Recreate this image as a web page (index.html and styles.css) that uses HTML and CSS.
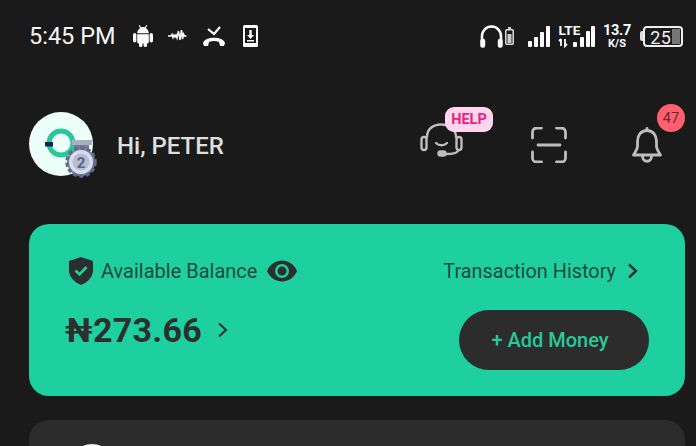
FILE: index.html
```html
<!DOCTYPE html>
<html lang="en">
<head>
<meta charset="utf-8">
<title>Wallet home</title>
<link rel="stylesheet" href="styles.css">
</head>
<body>
<div class="status">
  <div class="status-left">
    <span class="clock">5:45 PM</span>
    <svg class="ic-android" width="20" height="22" viewBox="0 0 20 22" fill="#fff"><path d="M6.500 0l1.700 2.300c1.100-.4 2.500-.4 3.600 0L13.500 0l.8.500-1.500 2.400C14.600 4 15.800 6 15.800 8.300H4.200C4.200 6 5.400 4 7.200 2.900L5.700.5z"/><path d="M4.200 9.200h11.600V17a1.500 1.500 0 0 1-1.500 1.500H5.700A1.500 1.500 0 0 1 4.200 17z"/><rect x="0" y="8" width="3.400" height="9.500" rx="1.700"/><rect x="16.600" y="8" width="3.400" height="9.500" rx="1.700"/><rect x="6" y="17" width="3.400" height="5" rx="1.600"/><rect x="10.600" y="17" width="3.400" height="5" rx="1.600"/></svg>
    <svg class="ic-wave" width="20" height="14" viewBox="0 0 20 14" fill="none" stroke="#fff" stroke-width="1.500"><path d="M0 7h3l1-1.500 1 3 1-2.500 1 2 1-2 1 3 1.500-7 1.500 9 1.500-10 1 9 1-5 1 2h2"/></svg>
    <svg class="ic-call" width="22" height="21" viewBox="0 0 22 21" fill="none"><path d="M5 3l6 5 6-7" stroke="#fff" stroke-width="2.200"/><path d="M0 17c2-7 20-7 22 0l-1 3h-4l-1-4c-3-1.500-7-1.500-10 0l-1 4H1z" fill="#fff"/></svg>
    <svg class="ic-dl" width="15" height="22" viewBox="0 0 15 22"><rect width="15" height="22" rx="1.500" fill="#fff"/><path d="M2 3h11v15H2z" fill="#1a1a1a"/><path d="M6.300 5h2.400v5H11l-3.500 4L4 10h2.300zM4 15h7v1.500H4z" fill="#fff"/></svg>
  </div>
  <div class="status-right">
    <svg class="ic-head" width="23" height="23" viewBox="0 0 23 23" fill="none" stroke="#fff" stroke-width="2.500"><path d="M2 17V11a9.500 9.500 0 0 1 19 0v6"/><rect x="1.500" y="15" width="2.500" height="6.500" rx="1" fill="#fff"/><rect x="19" y="15" width="2.500" height="6.500" rx="1" fill="#fff"/></svg>
    <svg class="ic-bat" width="9" height="18" viewBox="0 0 9 18"><path d="M3 0h3v2H3z" fill="#ccc"/><rect x=".8" y="2.800" width="7.400" height="14.400" rx="1" fill="none" stroke="#ddd" stroke-width="1.500"/><rect x="2.500" y="7" width="4" height="9" fill="#ccc"/></svg>
    <svg class="ic-sig" width="22" height="21" viewBox="0 0 22 21" fill="#fff"><rect y="15" width="4" height="6" rx="1"/><rect x="6" y="11" width="4" height="10" rx="1"/><rect x="12" y="6" width="4" height="15" rx="1"/><rect x="18" y="0" width="4" height="21" rx="1"/></svg>
    <svg class="ic-lte" width="37" height="22" viewBox="0 0 37 22" fill="#fff"><text class="lte-text" x="0.500" y="10">LTE</text><path d="M3 14v7M1 16l2-2M7 14v7l2-2" stroke="#fff" stroke-width="1.800" fill="none"/><rect x="15" y="17" width="4" height="5" rx="1"/><rect x="22" y="12" width="4" height="10" rx="1"/><rect x="28" y="6" width="4" height="16" rx="1"/><rect x="33" y="1" width="4" height="21" rx="1"/></svg>
    <div class="speed"><span class="speed-num">13.7</span><span class="speed-unit">K/S</span></div>
    <div class="battery"><span class="batt-tip"></span><div class="batt-body"><span class="batt-num">25</span><span class="batt-fill"></span></div></div>
  </div>
</div>

<header class="top">
  <div class="user">
    <div class="avatar">
      <svg class="avatar-art" width="64" height="64" viewBox="0 0 64 64"><circle cx="32" cy="32" r="32" fill="#ecfff8"/><circle cx="32" cy="31" r="12" fill="none" stroke="#27c99b" stroke-width="5"/><rect x="16" y="30" width="8" height="4.500" fill="#1b1c5c"/><rect x="43" y="28" width="20" height="5" fill="#a9afc2"/><rect x="45" y="33" width="15" height="6" fill="#767c90"/><circle cx="52" cy="50" r="14" fill="#7a85a8" stroke="#5f6b8f" stroke-width="3.500" stroke-dasharray="4 2.500"/><circle cx="52" cy="50" r="12" fill="#d9dcea"/><circle cx="52" cy="50" r="8.500" fill="#b6bdd6"/><text class="medal" x="52" y="55.500" text-anchor="middle">2</text></svg>
    </div>
    <span class="greet">Hi, PETER</span>
  </div>
  <div class="actions">
    <div class="help">
      <svg width="44" height="38" viewBox="0 0 44 38" fill="none" stroke="#bdbdbd" stroke-width="2.400" stroke-linecap="round"><path d="M7 17C7 9 13 4.500 21 4.500S36 9 36 17"/><rect x="1.500" y="17" width="5" height="13" rx="2.500"/><rect x="36.500" y="17" width="5" height="13" rx="2.500"/><path d="M16 23c3 3 8 3 11 0M38 31c-1 2-6 3-12 3"/><rect x="18.500" y="31.500" width="7" height="4" rx="2" fill="#bdbdbd"/></svg>
      <span class="help-tag">HELP</span>
    </div>
    <svg class="scan" width="36" height="36" viewBox="0 0 36 36" fill="none" stroke="#bdbdbd" stroke-width="2.800" stroke-linecap="round"><path d="M1.500 11V5a4 4 0 0 1 4-4h5M25.500 1h5a4 4 0 0 1 4 4v6M34.500 25v6a4 4 0 0 1-4 4h-5M10.500 35h-5a4 4 0 0 1-4-4v-6M7 18h22"/></svg>
    <div class="bell">
      <svg width="30" height="37" viewBox="0 0 30 37" fill="none" stroke="#bdbdbd" stroke-width="2.800" stroke-linejoin="round" stroke-linecap="round"><path d="M15 3.500c-6 0-9.500 5-9.500 10.500v5c0 3-2 6-4 9h27c-2-3-4-6-4-9v-5c0-5.500-3.500-10.500-9.500-10.500zM15 1.500v2M10.500 29c0 7 9 7 9 0"/></svg>
      <span class="bell-count">47</span>
    </div>
  </div>
</header>

<section class="balance">
  <div class="row">
    <div class="label">
      <svg width="24" height="28" viewBox="0 0 24 28"><path d="M12 0l12 4v9c0 7-5 12-12 15C5 25 0 20 0 13V4z" fill="#2b2f2e"/><path d="M6.500 13.500l4 4 7-7.500" fill="none" stroke="#1ecf9f" stroke-width="2.600"/></svg>
      <span class="label-text">Available Balance</span>
      <svg class="eye" width="30" height="22" viewBox="0 0 30 22"><path d="M0 11C3 4 9 .5 15 .5S27 4 30 11c-3 7-9 10.500-15 10.500S3 18 0 11z" fill="#2b2f2e"/><circle cx="15" cy="11" r="7" fill="#1ecf9f"/><circle cx="15" cy="11" r="4.500" fill="#2b2f2e"/></svg>
    </div>
    <div class="history">
      <span class="history-text">Transaction History</span>
      <svg width="11" height="16" viewBox="0 0 11 16" fill="none" stroke="#2b2f2e" stroke-width="2.400"><path d="M2 1.500L9 8l-7 6.500"/></svg>
    </div>
  </div>
  <div class="row row-low">
    <div class="amount-wrap">
      <span class="amount">₦273.66</span>
      <svg width="11" height="16" viewBox="0 0 11 16" fill="none" stroke="#2b2f2e" stroke-width="2"><path d="M2 1.500L9 8l-7 6.500"/></svg>
    </div>
    <button class="add">+ Add Money</button>
  </div>
</section>

<section class="next">
  <div class="next-avatar"></div>
</section>
</body>
</html>
```
FILE: styles.css
```css
* { box-sizing: border-box; }
html, body { margin: 0; padding: 0; }
body {
  width: 696px;
  height: 446px;
  overflow: hidden;
  background: #1a1a1a;
  font-family: Roboto, "Liberation Sans", sans-serif;
  color: #fff;
}
svg { display: block; flex: none; }

.status {
  height: 72px;
  padding: 0 13px 0 29px;
  display: flex;
  align-items: center;
  justify-content: space-between;
}
.status-left, .status-right { display: flex; align-items: center; }
.clock { font-size: 23.500px; font-weight: 400; color: #f5f5f5; width: 104px; white-space: nowrap; }
.ic-wave { margin-left: 15px; }
.ic-call { margin-left: 15px; }
.ic-dl { margin-left: 18px; }
.ic-bat { margin-left: 2px; }
.ic-sig { margin-left: 14px; }
.ic-lte { margin-left: 8px; overflow: visible; }
.lte-text { font: 700 13.500px Roboto, sans-serif; fill: #fff; }
.speed { margin-left: 8px; width: 28px; display: flex; flex-direction: column; align-items: center; }
.speed-num { font-size: 14.500px; font-weight: 700; height: 15px; line-height: 15px; letter-spacing: -.3px; }
.speed-unit { font-size: 11px; font-weight: 700; height: 11px; line-height: 11px; }
.battery { margin-left: 9px; display: flex; align-items: center; }
.batt-tip { width: 3px; height: 10px; background: #ddd; border-radius: 2px 0 0 2px; }
.batt-body {
  width: 40px;
  height: 21px;
  border: 2px solid #eee;
  border-radius: 4px;
  display: flex;
  align-items: stretch;
  justify-content: flex-end;
  padding: 1px;
  gap: 1px;
}
.batt-num { font-size: 18px; line-height: 17px; letter-spacing: .2px; color: #eee; }
.batt-fill { width: 8px; background: #777; }

.top {
  height: 72px;
  margin-top: 32px;
  padding: 0 11px 0 29px;
  display: flex;
  justify-content: space-between;
}
.user { display: flex; align-items: center; gap: 24px; padding-top: 8px; }
.avatar { width: 64px; height: 64px; }
.avatar-art { overflow: visible; }
.medal { font: 700 15px Roboto, sans-serif; fill: #5a6488; }
.greet { font-size: 24px; font-weight: 500; color: #dedede; padding-top: 3px; }
.actions { display: flex; align-items: flex-start; }
.help { position: relative; margin-top: 16px; width: 44px; height: 38px; }
.help-tag {
  position: absolute;
  left: 25px;
  top: -13px;
  width: 48px;
  height: 25px;
  border-radius: 9px;
  background: #ffd6ec;
  color: #e5257f;
  font-size: 14.500px;
  font-weight: 700;
  display: flex;
  align-items: center;
  justify-content: center;
}
.scan { margin: 23px 0 0 67px; }
.bell { position: relative; margin: 23px 23px 0 65px; width: 30px; height: 37px; }
.bell-count {
  position: absolute;
  left: 25px;
  top: -23px;
  width: 28px;
  height: 28px;
  border-radius: 50%;
  background: #ff5f6f;
  color: #6b2730;
  font-size: 14.500px;
  display: flex;
  align-items: center;
  justify-content: center;
}

.balance {
  height: 172px;
  margin: 48px 11px 0 29px;
  padding: 33px 47px 26px 36px;
  background: #1ecf9f;
  border-radius: 20px;
  color: #2b2f2e;
}
.row { display: flex; justify-content: space-between; align-items: center; }
.row-low { margin-top: 25px; }
.label { display: flex; align-items: center; padding-left: 4px; }
.label-text { font-size: 20px; margin-left: 8px; color: #1f4a41; }
.eye { margin-left: 10px; }
.history { display: flex; align-items: center; gap: 11px; }
.history-text { font-size: 19.900px; color: #1f4a41; }
.amount-wrap { display: flex; align-items: center; gap: 15px; margin-top: -20px; }
.amount { font-size: 34px; font-weight: 700; letter-spacing: .3px; }
.add {
  width: 190px;
  height: 60px;
  margin-right: -11px;
  padding: 0 8px 0 0;
  border: 0;
  border-radius: 30px;
  background: #2c2c2c;
  color: #27c99b;
  font: 500 20px Roboto, sans-serif;
}

.next {
  height: 26px;
  margin: 24px 11px 0 29px;
  padding: 24px 0 0 38px;
  background: #2c2c2c;
  border-radius: 20px 20px 0 0;
  overflow: hidden;
}
.next-avatar { width: 50px; height: 50px; border-radius: 50%; background: #f1f5f3; }
```
